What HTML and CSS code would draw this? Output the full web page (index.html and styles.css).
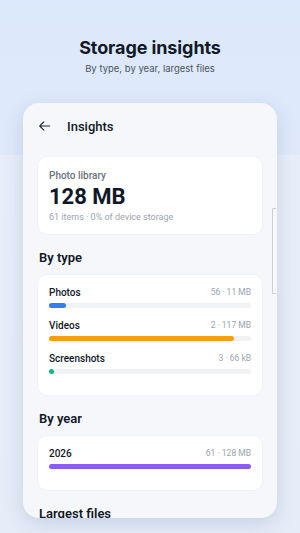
FILE: index.html
```html
<!DOCTYPE html>
<html lang="en">

<head>
    <meta charset="UTF-8">
    <meta name="viewport" content="width=device-width, initial-scale=1.0">
    <title>Storage insights</title>
    <link rel="stylesheet" href="styles.css">
</head>

<body>
    <div class="stage">
        <h1 class="title">Storage insights</h1>
        <p class="subtitle">By type, by year, largest files</p>

        <div class="phone">
            <div class="appbar">
                <svg class="back" width="14" height="14" viewBox="0 0 24 24">
                    <path d="M20 12H4M10 5l-7 7 7 7" fill="none" stroke="#1f2937" stroke-width="2" stroke-linecap="round" stroke-linejoin="round"/>
                </svg>
                <span class="appbar-title">Insights</span>
            </div>

            <div class="content">
                <div class="card summary">
                    <div class="summary-label">Photo library</div>
                    <div class="summary-size">128 MB</div>
                    <div class="summary-meta">61 items · 0% of device storage</div>
                </div>

                <div class="section-title">By type</div>
                <div class="card">
                    <div class="row">
                        <div class="row-head">
                            <span class="row-name">Photos</span>
                            <span class="row-meta">56 · 11 MB</span>
                        </div>
                        <div class="track"><div class="fill blue" style="width: 8.6%"></div></div>
                    </div>
                    <div class="row">
                        <div class="row-head">
                            <span class="row-name">Videos</span>
                            <span class="row-meta">2 · 117 MB</span>
                        </div>
                        <div class="track"><div class="fill orange" style="width: 91.4%"></div></div>
                    </div>
                    <div class="row">
                        <div class="row-head">
                            <span class="row-name">Screenshots</span>
                            <span class="row-meta">3 · 66 kB</span>
                        </div>
                        <div class="track"><div class="fill green" style="width: 0.05%"></div></div>
                    </div>
                </div>

                <div class="section-title">By year</div>
                <div class="card">
                    <div class="row">
                        <div class="row-head">
                            <span class="row-name">2026</span>
                            <span class="row-meta">61 · 128 MB</span>
                        </div>
                        <div class="track"><div class="fill purple" style="width: 100%"></div></div>
                    </div>
                </div>

                <div class="section-title">Largest files</div>
            </div>

            <div class="scroll-thumb"></div>
        </div>
    </div>
</body>

</html>
```

FILE: styles.css
```css
body {
    margin: 0;
    padding: 0;
    font-family: Roboto, "Liberation Sans", sans-serif;
}

.stage {
    height: 533px;
    overflow: hidden;
    padding-top: 37px;
    box-sizing: border-box;
    background: linear-gradient(#dce8fb 0, #dfe9fa 155px, #e8eef9 155px, #e6edf8 100%);
}

.title {
    margin: 0;
    font-family: Inter, "Liberation Sans", sans-serif;
    font-size: 18px;
    line-height: 22px;
    font-weight: 700;
    color: #111827;
    text-align: center;
    letter-spacing: -0.1px;
}

.subtitle {
    margin: 3px 0 0;
    font-family: Inter, "Liberation Sans", sans-serif;
    font-size: 9.5px;
    line-height: 14px;
    color: #4b5563;
    text-align: center;
}

.phone {
    position: relative;
    width: 254px;
    height: 415px;
    margin: 27px auto 0;
    border-radius: 16px;
    background-color: #f5f7fb;
    box-shadow: 0 6px 20px rgba(40, 70, 130, 0.16);
    overflow: hidden;
}

.appbar {
    display: flex;
    align-items: center;
    height: 46px;
    padding-left: 15px;
}

.back {
    display: block;
}

.appbar-title {
    margin-left: 15px;
    font-size: 13px;
    font-weight: 500;
    color: #111827;
}

.content {
    padding: 7px 14px 0;
}

.card {
    background-color: #fff;
    border: 1px solid #eef1f5;
    border-radius: 10px;
    padding: 10px 11px 21px;
}

.summary {
    padding: 12px 11px 10px;
}

.summary-label {
    font-size: 10px;
    line-height: 14px;
    font-weight: 500;
    color: #6b7280;
}

.summary-size {
    margin-top: 1px;
    font-size: 22px;
    line-height: 26px;
    font-weight: 700;
    color: #111827;
}

.summary-meta {
    font-size: 9px;
    line-height: 14px;
    color: #9ca3af;
}

.section-title {
    margin: 14px 2px 7px;
    font-size: 13px;
    line-height: 18px;
    font-weight: 600;
    color: #111827;
}

.row + .row {
    margin-top: 10px;
}

.row-head {
    display: flex;
    justify-content: space-between;
    align-items: center;
    height: 14px;
}

.row-name {
    font-size: 10px;
    font-weight: 500;
    color: #111827;
}

.row-meta {
    font-size: 8.5px;
    color: #9ca3af;
}

.track {
    height: 5px;
    margin-top: 4px;
    border-radius: 3px;
    background-color: #f0f2f5;
}

.fill {
    height: 100%;
    min-width: 5px;
    border-radius: 3px;
}

.blue {
    background-color: #2f7ff0;
}

.orange {
    background-color: #f59f0d;
}

.green {
    background-color: #10b981;
}

.purple {
    background-color: #8b5cf6;
}

.scroll-thumb {
    position: absolute;
    top: 105px;
    right: 1px;
    width: 4px;
    height: 86px;
    border: 1px solid #cbced3;
    border-right: none;
    border-radius: 2px 0 0 2px;
    box-sizing: border-box;
}
```
